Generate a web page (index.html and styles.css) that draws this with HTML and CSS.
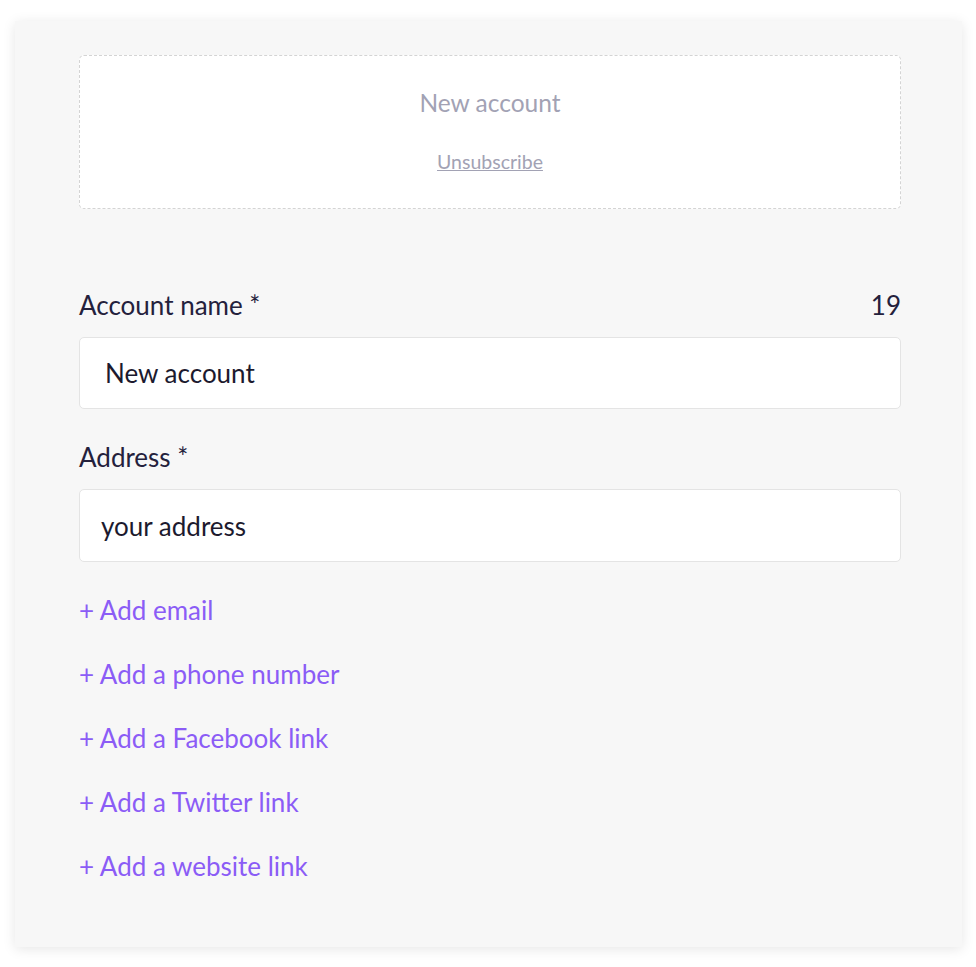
FILE: index.html
```html
<!DOCTYPE html>
<html>
<head>
<meta charset="utf-8">
<link rel="stylesheet" href="styles.css">
</head>
<body>
<div class="card">
  <div class="preview">
    <div class="preview-title">New account</div>
    <a class="unsub" href="#">Unsubscribe</a>
  </div>
  <div class="field first">
    <div class="label-row">
      <span class="label">Account name *</span>
      <span class="count">19</span>
    </div>
    <div class="input input-name">New account</div>
  </div>
  <div class="field">
    <div class="label-row">
      <span class="label">Address *</span>
    </div>
    <div class="input input-addr">your address</div>
  </div>
  <div class="links">
    <a href="#" class="add">+ Add email</a>
    <a href="#" class="add">+ Add a phone number</a>
    <a href="#" class="add">+ Add a Facebook link</a>
    <a href="#" class="add">+ Add a Twitter link</a>
    <a href="#" class="add">+ Add a website link</a>
  </div>
</div>
</body>
</html>
```
FILE: styles.css
```css
html, body {
  margin: 0;
  padding: 0;
  background: #ffffff;
}
body {
  padding: 21px 14px 20px 15px;
  font-family: Lato, "Open Sans", sans-serif;
}
.card {
  box-sizing: border-box;
  width: 947px;
  height: 926px;
  background: #f7f7f7;
  box-shadow: 0 2px 12px rgba(0,0,0,0.10);
  padding: 34px 61px 0 64px;
}
.preview {
  box-sizing: border-box;
  height: 154px;
  background: #ffffff;
  border: 1px dashed #d4d4d4;
  border-radius: 5px;
  display: flex;
  flex-direction: column;
  align-items: center;
  padding-top: 31px;
}
.preview-title {
  font-size: 24.5px;
  color: #a2a2b4;
  line-height: 32px;
}
.unsub {
  margin-top: 32px;
  font-size: 19.5px;
  color: #a2a2b4;
  text-decoration: underline;
  line-height: 22px;
}
.field.first {
  margin-top: 80px;
}
.field {
  margin-top: 32px;
}
.label-row {
  display: flex;
  justify-content: space-between;
  align-items: center;
  height: 32px;
  margin-bottom: 16px;
}
.label, .count {
  font-size: 26px;
  color: #24213c;
}
.input {
  box-sizing: border-box;
  height: 72px;
  background: #ffffff;
  border: 1px solid #e4e4e4;
  border-radius: 5px;
  display: flex;
  align-items: center;
  font-size: 26px;
  color: #1c1a2e;
}
.input-name { padding-left: 25px; }
.input-addr { padding-left: 21px; height: 73px; }
.links {
  display: flex;
  flex-direction: column;
  margin-top: 32px;
  gap: 32px;
}
.add {
  font-size: 26px;
  line-height: 32px;
  color: #8b5cf6;
  text-decoration: none;
}
```
